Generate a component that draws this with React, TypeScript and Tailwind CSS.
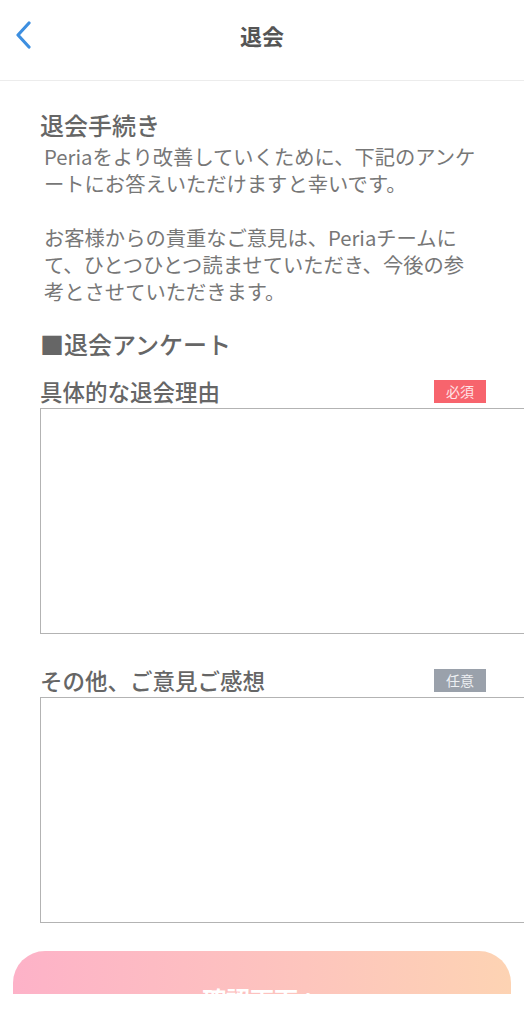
import React from "react";

const jp = { fontFamily: '"Noto Sans CJK JP", "Noto Sans", sans-serif' };

function Badge({ label, tone }: { label: string; tone: "red" | "gray" }) {
  return (
    <span
      className={
        tone === "red"
          ? "flex h-[23px] w-[52px] items-center justify-center bg-[#f7646d] text-[14px] leading-none text-[#ffe3e6]"
          : "flex h-[23px] w-[52px] items-center justify-center bg-[#9aa1ab] text-[14px] leading-none text-[#eef0f3]"
      }
    >
      {label}
    </span>
  );
}

function Field({ label, badge, tone }: { label: string; badge: string; tone: "red" | "gray" }) {
  return (
    <div>
      <div className="flex w-[446px] items-center justify-between">
        <span className="text-[22.5px] font-medium leading-[34px] text-[#666]">{label}</span>
        <Badge label={badge} tone={tone} />
      </div>
      <textarea className="block h-[226px] w-[500px] resize-none border border-[#b3b3b3] bg-white outline-none" />
    </div>
  );
}

export default function App() {
  return (
    <div className="h-[1024px] w-[524px] overflow-hidden bg-white" style={jp}>
      <header className="relative flex h-[81px] items-center justify-center border-b border-[#ececec]">
        <button className="absolute left-[12px] top-[20px] flex h-[30px] w-[22px] items-center justify-center">
          <svg width="18" height="28" viewBox="0 0 18 28" fill="none">
            <path d="M15 2 L4 14 L15 26" stroke="#3d8fe0" strokeWidth="3.2" strokeLinecap="round" strokeLinejoin="round" />
          </svg>
        </button>
        <h1 className="-mt-[10px] text-[22px] font-bold text-[#555]">退会</h1>
      </header>

      <main className="pl-[40px] pt-[26px]">
        <h2 className="text-[24px] font-medium leading-[36px] text-[#666]">退会手続き</h2>
        <p className="pl-[4px] text-[20.3px] leading-[27px] text-[#777]">
          Periaをより改善していくために、下記のアンケ
          <br />
          ートにお答えいただけますと幸いです。
          <br />
          <br />
          お客様からの貴重なご意見は、Periaチームに
          <br />
          て、ひとつひとつ読ませていただき、今後の参
          <br />
          考とさせていただきます。
        </p>

        <h3 className="mt-[21px] text-[24px] font-medium leading-[36px] text-[#666]">■退会アンケート</h3>

        <div className="mt-[12px]">
          <Field label="具体的な退会理由" badge="必須" tone="red" />
        </div>
        <div className="mt-[29px]">
          <Field label="その他、ご意見ご感想" badge="任意" tone="gray" />
        </div>
      </main>

      <div className="mt-[28px] h-[43px] overflow-hidden px-[13px]">
        <div className="flex h-[90px] w-[498px] items-start justify-center rounded-[32px] bg-gradient-to-r from-[#fdb2c8] via-[#fdc2bf] to-[#fdd3b3] pt-[36px] text-[24px] font-bold leading-none text-white">
          確認画面へ
        </div>
      </div>
    </div>
  );
}
